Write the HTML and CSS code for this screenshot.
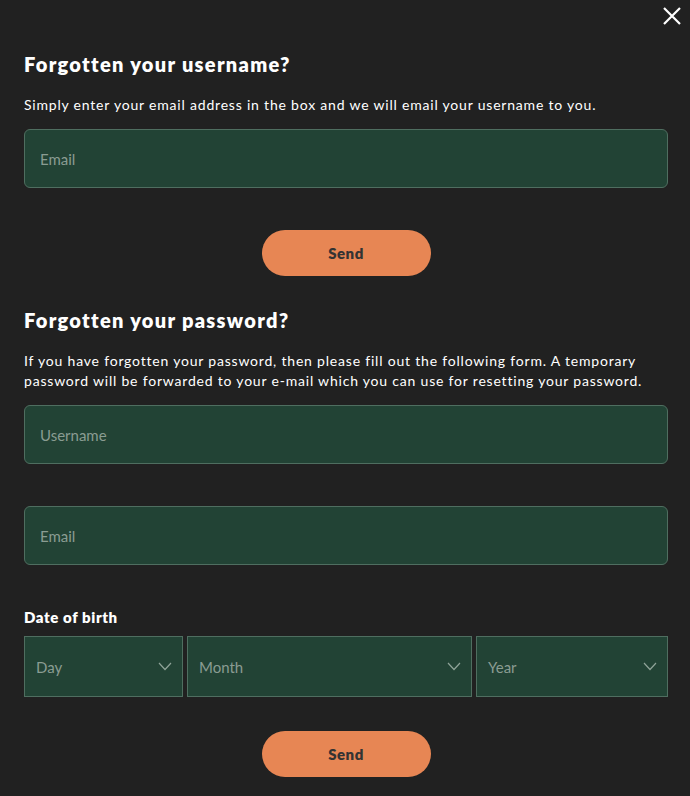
FILE: index.html
```html
<!DOCTYPE html>
<html>
<head>
  <meta charset="UTF-8" />
  <title>Forgotten details</title>
  <link rel="stylesheet" href="styles.css">
</head>
<body>

  <div class="modal">
    <button class="close" aria-label="Close">
      <svg width="20" height="20" viewBox="0 0 20 20"><path d="M2 2 L18 18 M18 2 L2 18" stroke="#fff" stroke-width="2.2" fill="none"/></svg>
    </button>

    <div class="block">
      <h2>Forgotten your username?</h2>
      <p>Simply enter your email address in the box and we will email your username to you.</p>
      <input class="field" type="email" placeholder="Email">
      <div class="actions"><button class="btn">Send</button></div>
    </div>

    <div class="block">
      <h2>Forgotten your password?</h2>
      <p>If you have forgotten your password, then please fill out the following form. A temporary password will be forwarded to your e-mail which you can use for resetting your password.</p>
      <input class="field" type="text" placeholder="Username">
      <input class="field gap" type="email" placeholder="Email">

      <label class="dob-label">Date of birth</label>
      <div class="dob">
        <div class="select"><span>Day</span><svg width="14" height="9" viewBox="0 0 14 9"><path d="M1 1 L7 7.5 L13 1" stroke="#8fa398" stroke-width="1.2" fill="none"/></svg></div>
        <div class="select"><span>Month</span><svg width="14" height="9" viewBox="0 0 14 9"><path d="M1 1 L7 7.5 L13 1" stroke="#8fa398" stroke-width="1.2" fill="none"/></svg></div>
        <div class="select"><span>Year</span><svg width="14" height="9" viewBox="0 0 14 9"><path d="M1 1 L7 7.5 L13 1" stroke="#8fa398" stroke-width="1.2" fill="none"/></svg></div>
      </div>
      <div class="actions last"><button class="btn">Send</button></div>
    </div>
  </div>

</body>
</html>
```

FILE: styles.css
```css
body { background: #212121; color: #fff; font-family: Lato, 'Noto Sans', sans-serif; margin: 0; }
.modal { position: relative; padding: 51px 22px 20px 24px; }
.close {
  position: absolute; top: 6px; right: 8px;
  background: none; border: none; padding: 0; cursor: pointer;
}
h2 { font-size: 20px; font-weight: 800; margin: 0 0 18px; line-height: 26px; letter-spacing: 1.3px; }
p { font-size: 14px; line-height: 20px; margin: 0 0 14px; letter-spacing: 0.8px; }
.field {
  display: block; box-sizing: border-box;
  width: 100%; height: 59px; padding: 0 15px;
  background: #224335; border: 1px solid #4f6e60; border-radius: 6px;
  color: #fff; font-family: inherit; font-size: 15px; outline: none;
}
.field::placeholder { color: #8a9c92; }
.field.gap { margin-top: 42px; }
.actions { display: flex; justify-content: center; margin: 42px 0 31px; }
.actions.last { margin: 34px 0 0; }
.btn {
  width: 169px; height: 46px; border: none; border-radius: 23px;
  background: #e78654; color: #333; font-family: inherit;
  font-size: 15px; font-weight: 800; letter-spacing: 0.5px; cursor: pointer;
}
.dob-label { display: block; margin: 42px 0 9px; font-size: 15px; font-weight: 800; line-height: 20px; letter-spacing: 0.6px; }
.dob { display: grid; grid-template-columns: 159px 285px 1fr; gap: 4px; }
.select {
  display: flex; align-items: center; justify-content: space-between;
  box-sizing: border-box; height: 61px; padding: 0 10px 0 11px;
  background: #224335; border: 1px solid #4f6e60;
  color: #8a9c92; font-size: 15px;
}
```
